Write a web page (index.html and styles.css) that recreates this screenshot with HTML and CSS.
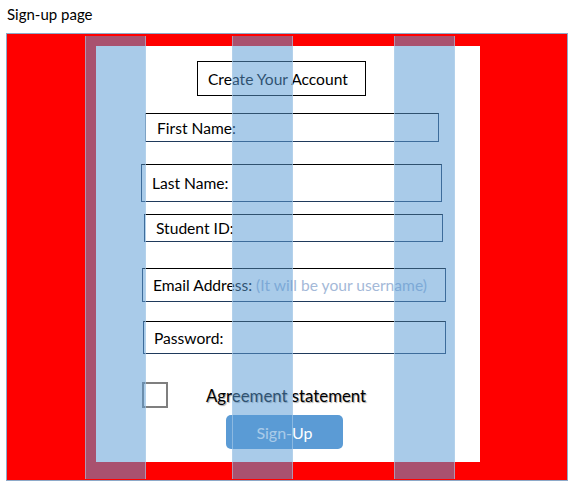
FILE: index.html
```html
<!DOCTYPE html>
<html lang="en">
<head>
    <meta charset="UTF-8">
    <title>Sign-up page</title>
    <link rel="stylesheet" href="styles.css">
</head>
<body>
    <div class="page-title">Sign-up page</div>

    <div class="frame">
        <div class="panel">
            <div class="heading">Create Your Account</div>

            <div class="field first">First Name:</div>
            <div class="field last">Last Name:</div>
            <div class="field student">Student ID:</div>
            <div class="field email">Email Address: <span class="hint">(It will be your username)</span></div>
            <div class="field password">Password:</div>

            <div class="agree-row">
                <span class="checkbox"></span>
                <span class="agree-text">Agreement statement</span>
            </div>

            <button class="signup">Sign-Up</button>
        </div>

        <!-- guide columns drawn over the mockup -->
        <div class="guide g1"></div>
        <div class="guide g2"></div>
        <div class="guide g3"></div>
    </div>
</body>
</html>
```

FILE: styles.css
```css
body {
    margin: 0;
    font-family: Lato, "Liberation Sans", sans-serif;
    background: #fff;
    color: #000;
}
.page-title {
    font-size: 15px;
    padding: 5px 0 0 7px;
    height: 33px;
    box-sizing: border-box;
}
.frame {
    position: relative;
    margin-left: 6px;
    width: 562px;
    height: 448px;
    box-sizing: border-box;
    border: 1px solid #8ea9c8;
    background: #ff0000;
    padding: 12px 0 0 89px;
}
.panel {
    width: 384px;
    height: 416px;
    background: #fff;
    display: flex;
    flex-direction: column;
    align-items: flex-start;
    padding-top: 15px;
    box-sizing: border-box;
}
.heading {
    margin-left: 101px;
    width: 169px;
    height: 35px;
    box-sizing: border-box;
    border: 1px solid #000;
    font-size: 15.6px;
    display: flex;
    align-items: center;
    padding-left: 10px;
}
.field {
    box-sizing: border-box;
    border: 1px solid #1f3a5c;
    border-top-color: #000;
    font-size: 15.6px;
    display: flex;
    align-items: center;
    white-space: pre;
}
.first {
    margin: 17px 0 0 49px;
    width: 294px;
    height: 29px;
    padding-left: 11px;
}
.last {
    margin: 22px 0 0 45px;
    width: 301px;
    height: 38px;
    padding-left: 10px;
}
.student {
    margin: 12px 0 0 48px;
    width: 299px;
    height: 28px;
    padding-left: 11px;
}
.email {
    margin: 26px 0 0 46px;
    width: 304px;
    height: 34px;
    padding-left: 10px;
}
.password {
    margin: 19px 0 0 47px;
    width: 303px;
    height: 33px;
    padding-left: 10px;
}
.hint {
    color: #a4b9d8;
}
.agree-row {
    margin: 28px 0 0 46px;
    display: flex;
    align-items: center;
}
.checkbox {
    width: 26px;
    height: 26px;
    box-sizing: border-box;
    border: 2px solid #7f7f7f;
}
.agree-text {
    margin-left: 38px;
    font-size: 16.8px;
    text-shadow: 1px 1px 1px rgba(0,0,0,0.35);
}
.signup {
    margin: 7px 0 0 130px;
    width: 117px;
    height: 34px;
    border: none;
    border-radius: 5px;
    background: #5b9bd5;
    color: #fff;
    font-family: inherit;
    font-size: 16px;
}
.guide {
    position: absolute;
    top: 2px;
    bottom: 1px;
    width: 61px;
    box-sizing: border-box;
    background: rgba(91,155,213,0.52);
    border-left: 1px solid rgba(189,215,238,0.5);
    border-right: 1px solid rgba(189,215,238,0.5);
}
.g1 { left: 78px; }
.g2 { left: 225px; }
.g3 { left: 387px; }
```
